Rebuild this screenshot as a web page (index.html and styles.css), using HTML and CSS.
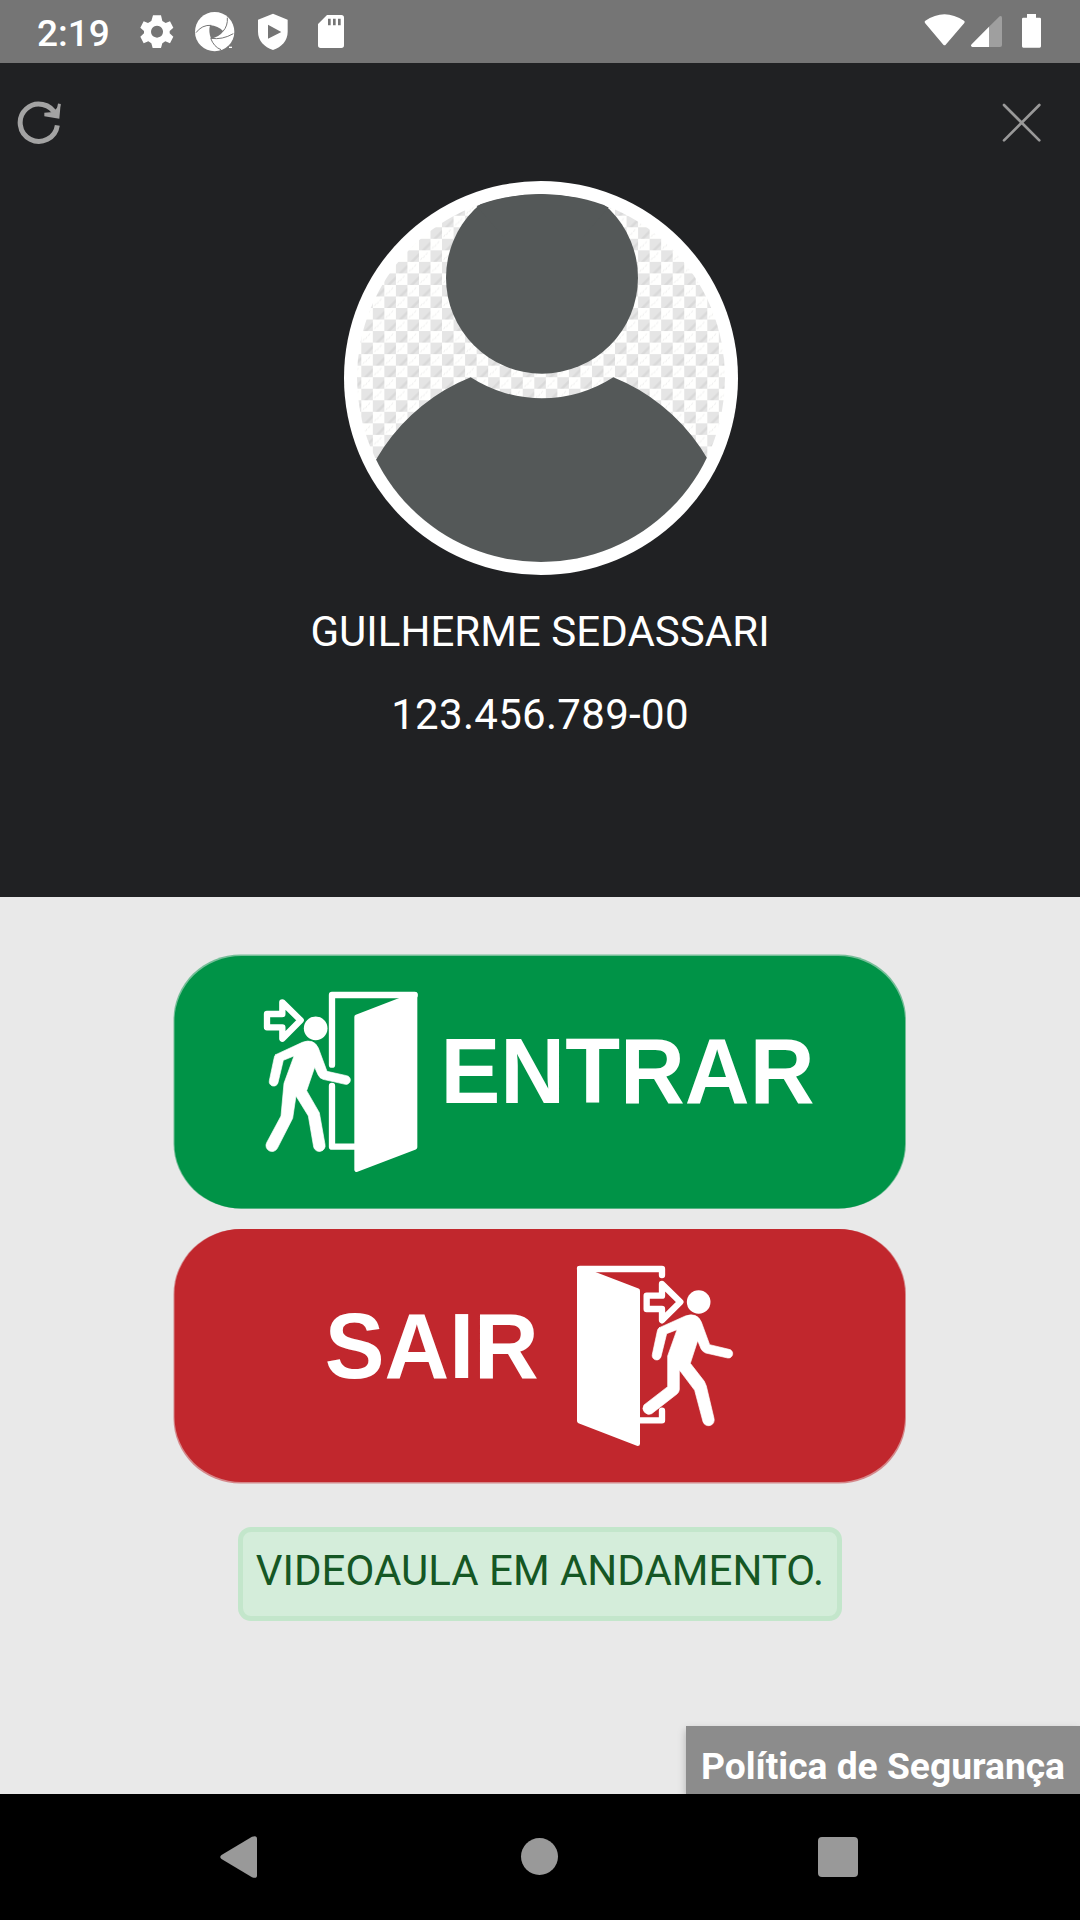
FILE: index.html
```html
<!DOCTYPE html>
<html lang="pt-BR">
<head>
<meta charset="utf-8">
<title>Registro de presença</title>
<link rel="stylesheet" href="styles.css">
</head>
<body>
<div class="screen">
  <div class="status-bar">
    <span class="clock">2:19</span>
    <div class="status-icons">
      <svg viewBox="399 0 144 189"><path fill-rule="evenodd" d="M459 46h24l4 17 10 6 13-5 10 19-11 10v7l11 10-10 20-14-6-9 6-4 14h-25l-4-14-9-6-14 6-10-20 11-10v-7l-11-10 10-19 13 5 10-6zM471 77a18 18 0 1 0 .1 0z"/></svg>
      <svg viewBox="573 0 144 189"><circle cx="644" cy="95" r="59"/><path class="cut" d="M630 76q24 1 40 18-12 17-37 22-8-20-3-40z"/><path class="cut-line" d="M588 98Q606 74 634 76M682 53Q684 77 669 94M700 101Q667 120 633 115M632 115Q642 141 663 149"/><path d="M687 140h9v4h-9z"/></svg>
      <svg viewBox="747 0 144 189"><path fill-rule="evenodd" d="M819 41l44 18v36c0 27-18 46-44 55-26-9-45-28-45-55V59zM804 74v42l40-20z"/></svg>
      <svg viewBox="921 0 144 189"><path fill-rule="evenodd" d="M981 45h43q8 0 8 8v83q0 8-8 8h-62q-8 0-8-8V72zM984 56v20h8V56zm15 0v20h8V56zm15 0v20h8V56z"/></svg>
    </div>
    <svg class="radio" viewBox="66 0 372 189"><path d="M75 69q-3-4 1-7 57-39 116 0 4 3 1 7l-56 65q-3 4-7 0z"/><path d="M267 80v61h-50q-7-3-2-8z"/><path class="faded" d="M267 80l32-31q7-3 7 4v82q0 6-6 6h-33z"/><path d="M381 42h27v11h11q4 0 4 4v82q0 4-4 4h-49q-4 0-4-4V57q0-4 4-4h11z"/></svg>
  </div>

  <header class="profile">
    <div class="toolbar">
      <svg class="refresh" viewBox="48 297 141 138"><path class="ring" d="M172 373A56 56 0 1 1 168 343"/><path class="tip" d="M178 308L173 332"/><path class="tip-fill" d="M182 308L178 353 133 346V335L160 333 170 322z"/></svg>
      <svg class="close" viewBox="303 307 123 123"><path d="M312 316L418 422M418 316L312 422"/></svg>
    </div>
    <svg class="avatar" viewBox="42 33 1182 1182">
      <defs>
        <clipPath id="disc"><circle cx="633" cy="624" r="552"/></clipPath>
        <pattern id="checker" x="128.500" y="414" width="69.200" height="69.200" patternUnits="userSpaceOnUse">
          <rect width="69.200" height="69.200" fill="#fffffe"/>
          <path d="M0 0h34.600v34.600H0zM34.600 34.600h34.600v34.600H34.600z" fill="#e5e5e5"/>
          <path d="M8 34.600h10L34.600 18V8zM42.600 69.200h10l16.600-16.600v-10z" fill="#d9d9d9"/>
          <path d="M40 30l4-8M48 24l4-8M56 15l4-8M5 64l4-8M13 58l4-8M21 49l4-8" stroke="#e6e6e6" stroke-width="2"/>
        </pattern>
      </defs>
      <circle cx="633" cy="624" r="591" fill="#fff"/>
      <g clip-path="url(#disc)">
        <rect x="80" y="70" width="1110" height="1110" fill="url(#checker)"/>
        <circle cx="636" cy="323" r="288" fill="#545858"/>
        <path d="M440 108Q535 72 633 72T836 112L760 200H520z" fill="#545858"/>
        <path d="M422 622A395 395 0 0 0 850 622 574 574 0 0 1 1210 1155V1220H62V1155A574 574 0 0 1 422 622z" fill="#545858"/>
      </g>
    </svg>
    <p class="name">GUILHERME SEDASSARI</p>
    <p class="document">123.456.789-00</p>
  </header>

  <main class="actions">
    <svg class="button" viewBox="0 0 734 255" role="button">
      <rect x=".5" y=".5" width="732.500" height="254" rx="67" ry="65" fill="#009347" opacity=".5"/>
      <rect x="1.500" y="2" width="730.500" height="252.500" rx="67" ry="65" fill="#009347"/>
      <g transform="translate(-13 -14) scale(.33333)" fill="#fff" stroke="#fff" stroke-linecap="round" stroke-linejoin="round">
        <path d="M584 620H516V438M516 374V165H764" fill="none" stroke-width="19"/>
        <path d="M590 231L765 163V622L590 689z" stroke-width="14"/>
        <path d="M321 222H367V187L422 241 367 296V262H321z" fill="none" stroke-width="19"/>
        <circle cx="467" cy="265" r="35.500" stroke="none"/>
        <path stroke-width="2" d="M347 344L427 307Q461 294 475 324L501 394 560 407A13 13 0 0 1 556 433L489 418Q478 414 474 404L464 382 440 452 478 518 495 613A17 17 0 0 1 461 621L445 528 408 468 398 535 352 625A18 18 0 0 1 320 608L363 528 372 430 402 348 370 361 354 428A13 13 0 0 1 328 422L342 356Q343 347 347 344z"/>
      </g>
      <text class="label" x="267.500" y="149" textLength="374" lengthAdjust="spacingAndGlyphs">ENTRAR</text>
    </svg>
    <svg class="button" viewBox="0 0 734 255" role="button">
      <rect x=".5" y="0" width="732.500" height="254.500" rx="67" ry="65" fill="#c1272d" opacity=".5"/>
      <rect x="1.500" y="0" width="730.500" height="253" rx="67" ry="65" fill="#c1272d"/>
      <g transform="translate(387 -9) scale(.33333)" fill="#fff" stroke="#fff" stroke-linecap="round" stroke-linejoin="round">
        <path d="M240 601H306V572M60 147H306V165" fill="none" stroke-width="19"/>
        <path d="M58 145L233 212V671L58 603z" stroke-width="14"/>
        <path d="M260 227H306V192L361 246 306 301V267H260z" fill="none" stroke-width="19"/>
        <circle cx="416" cy="246" r="35.500" stroke="none"/>
        <path stroke-width="2" d="M298 323L376 288Q411 276 424 306L449 374 507 388A13 13 0 0 1 503 414L437 399Q427 395 423 386L413 362 391 430 433 484 439 498 462 595A17 17 0 0 1 429 605L404 511 358 450V509Q357 517 351 522L275 581A18 18 0 0 1 252 555L323 500V408L351 329 320 341 303 410A13 13 0 0 1 277 403L292 333Q293 326 298 323z"/>
      </g>
      <text class="label" x="151.800" y="149" textLength="214" lengthAdjust="spacingAndGlyphs">SAIR</text>
    </svg>
    <p class="notice">VIDEOAULA EM ANDAMENTO.</p>
    <a class="policy">Política de Segurança</a>
  </main>

  <nav class="nav-bar">
    <svg class="back" viewBox="0 0 37 42"><path d="M1.500 19L32 .800q5-2 5 2v36.400q0 4-5 2L1.500 23q-2.500-2 0-4z"/></svg>
    <span class="home"></span>
    <span class="recent"></span>
  </nav>
</div>
</body>
</html>
```
FILE: styles.css
```css
* { box-sizing: border-box; }

body {
  margin: 0;
  font-family: Roboto, "Liberation Sans", sans-serif;
}

p { margin: 0; }

svg { display: block; }

.screen {
  display: flex;
  flex-direction: column;
  width: 1080px;
  height: 1920px;
  overflow: hidden;
}

.status-bar {
  display: flex;
  align-items: center;
  height: 63px;
  padding: 0 34px 0 37px;
  background: #757575;
  color: #fff;
  fill: #fff;
}

.clock {
  width: 96px;
  font-size: 37px;
  font-weight: 500;
  line-height: 63px;
  padding-top: 3px;
}

.status-icons {
  display: flex;
  gap: 10px;
}

.status-icons svg { width: 48px; height: 63px; }

.cut { fill: #757575; }

.cut-line { fill: none; stroke: #757575; stroke-width: 3; }

.radio {
  width: 124px;
  height: 63px;
  margin-left: auto;
}

.faded { fill: #9f9f9f; }

.profile {
  display: flex;
  flex-direction: column;
  align-items: center;
  height: 834px;
  background: #202123;
  color: #fff;
  font-size: 42px;
  text-align: center;
}

.toolbar {
  display: flex;
  justify-content: space-between;
  align-self: stretch;
  height: 118px;
  padding: 37px 38px 0 16px;
  fill: none;
  stroke: #a3a3a3;
}

.refresh { width: 47px; height: 46px; }

.ring { stroke-width: 15; }

.tip { stroke-width: 8; }

.tip-fill { fill: #a3a3a3; stroke: none; }

.close {
  width: 41px;
  height: 41px;
  margin-top: 2px;
  stroke: #999;
  stroke-width: 8;
  stroke-linecap: round;
}

.avatar {
  width: 394px;
  height: 394px;
  margin-left: 2px;
}

.name {
  margin-top: 32px;
  line-height: 50px;
  letter-spacing: .04px;
}

.document {
  margin-top: 33px;
  line-height: 50px;
  letter-spacing: .3px;
}

.actions {
  position: relative;
  display: flex;
  flex-direction: column;
  align-items: center;
  gap: 20px;
  height: 897px;
  padding-top: 57px;
  overflow: hidden;
  background: #e9e9e9;
}

.button { width: 734px; height: 255px; }

.label {
  fill: #fff;
  font: bold 93.500px "Liberation Sans", Arial, sans-serif;
}

.notice {
  width: 604px;
  height: 94px;
  margin-top: 23px;
  padding-top: 14px;
  border: 5px solid #c3e6cb;
  border-radius: 13px;
  background: #d4edda;
  color: #155724;
  font-size: 42px;
  line-height: 50px;
  text-align: center;
}

.policy {
  position: absolute;
  right: 0;
  bottom: 0;
  width: 394px;
  height: 68px;
  padding-left: 15px;
  background: #8c8c8c;
  box-shadow: 0 4px 8px rgba(0, 0, 0, .25);
  color: #fff;
  font-size: 37.200px;
  font-weight: 700;
  line-height: 80px;
  white-space: nowrap;
}

.nav-bar {
  display: flex;
  align-items: center;
  height: 126px;
  padding-left: 220px;
  background: #000;
  fill: #999;
}

.back { width: 37px; height: 42px; }

.home {
  width: 37px;
  height: 37px;
  margin: -1px 0 0 264px;
  border-radius: 50%;
  background: #999;
}

.recent {
  width: 40px;
  height: 40px;
  margin-left: 260px;
  border-radius: 4px;
  background: #999;
}
```
